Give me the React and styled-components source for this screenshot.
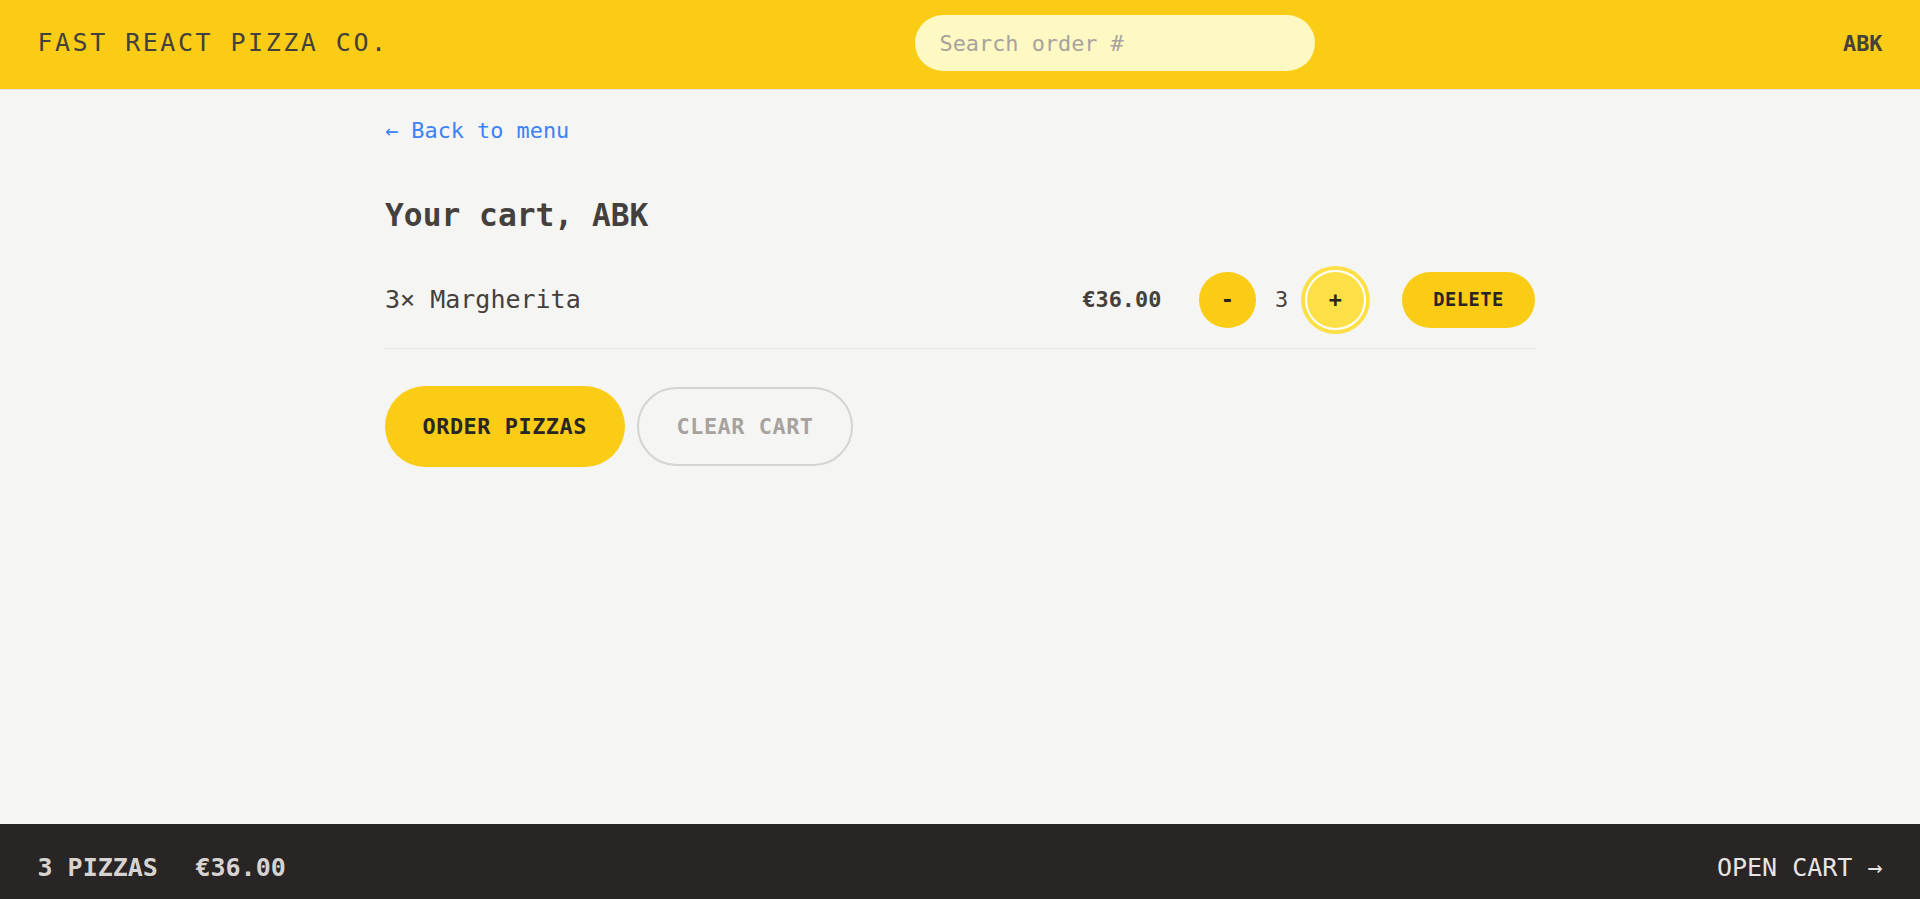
import React from "react";
import styled, { createGlobalStyle, css } from "styled-components";

const GlobalStyle = createGlobalStyle`
  *, *::before, *::after {
    box-sizing: border-box;
  }

  html, body {
    margin: 0;
    padding: 0;
  }

  body {
    font-family: "DejaVu Sans Mono", "Liberation Mono", monospace;
    background: #f5f5f4;
    color: #44403c;
    overflow: hidden;
  }
`;

const Layout = styled.div`
  display: grid;
  grid-template-rows: auto 1fr 75px;
  height: 100vh;
`;

const Header = styled.header`
  display: flex;
  align-items: center;
  padding: 15px 37.5px 18px;
  background: #facc15;
  border-bottom: 1px solid #e7e5e4;
  text-transform: uppercase;
`;

const Logo = styled.a`
  font-size: 25px;
  line-height: 37.5px;
  letter-spacing: 0.1em;
  color: #44403c;
  text-decoration: none;
`;

const SearchInput = styled.input`
  width: 400px;
  margin-left: 526px;
  padding: 12.5px 25px;
  border: none;
  border-radius: 9999px;
  background: #fef9c3;
  font-family: inherit;
  font-size: 21.875px;
  line-height: 31.25px;
  color: #44403c;
  outline: none;

  &::placeholder {
    color: #a8a29e;
  }
`;

const Username = styled.div`
  margin-left: auto;
  font-size: 21.875px;
  font-weight: 600;
  color: #44403c;
`;

const Main = styled.main`
  overflow: hidden;
`;

const Container = styled.div`
  max-width: 1200px;
  margin: 0 auto;
  padding: 24.5px 25px;
`;

const BackLink = styled.a`
  display: block;
  width: fit-content;
  font-size: 21.875px;
  line-height: 32px;
  color: #3b82f6;
  text-decoration: none;
`;

const Title = styled.h2`
  margin: 48px 0 0;
  font-size: 31.25px;
  line-height: 40px;
  font-weight: 600;
  color: #44403c;
`;

const CartList = styled.ul`
  margin: 17.5px 0 0;
  padding: 0;
  list-style: none;
  border-bottom: 1px solid #e7e5e4;
`;

const CartRow = styled.li`
  display: flex;
  align-items: center;
  justify-content: space-between;
  padding: 19.5px 0;
`;

const ItemName = styled.p`
  margin: 0;
  font-size: 25px;
  line-height: 37.5px;
`;

const ItemControls = styled.div`
  display: flex;
  align-items: center;
  gap: 37.5px;
`;

const Price = styled.p`
  margin: 0;
  font-size: 21.875px;
  font-weight: 700;
`;

const Quantity = styled.div`
  display: flex;
  align-items: center;
  gap: 18.75px;
`;

const Count = styled.span`
  font-size: 21.875px;
  font-weight: 500;
`;

const variants = {
  primary: css`
    padding: 25px 37.5px;
    font-size: 21.875px;
    line-height: 31.25px;
  `,
  secondary: css`
    padding: 21.875px 37.5px;
    font-size: 21.875px;
    line-height: 31.25px;
    background: transparent;
    border: 2px solid #d6d3d1;
    color: #a8a29e;
  `,
  small: css`
    padding: 15.625px 31.25px;
    font-size: 18.75px;
    line-height: 25px;
  `,
  round: css`
    padding: 12.5px 21.875px;
    font-size: 21.875px;
    line-height: 31.25px;
  `,
};

const Button = styled.button`
  font-family: inherit;
  font-weight: 600;
  text-transform: uppercase;
  letter-spacing: 0.025em;
  border: none;
  border-radius: 9999px;
  background: #facc15;
  color: #292524;
  cursor: pointer;
  ${(p) => variants[p.$variant || "primary"]}
  ${(p) =>
    p.$active &&
    css`
      background: #fde047;
      box-shadow: 0 0 0 2px #ffffff, 0 0 0 6px #fde047;
    `}
`;

const Actions = styled.div`
  display: flex;
  align-items: center;
  gap: 12.5px;
  margin-top: 37.5px;
`;

const Footer = styled.footer`
  display: flex;
  align-items: flex-start;
  justify-content: space-between;
  padding: 25px 37.5px 0;
  background: #292524;
  color: #e7e5e4;
  text-transform: uppercase;
  font-size: 25px;
  line-height: 37.5px;
  overflow: hidden;
`;

const Summary = styled.p`
  display: flex;
  gap: 37.5px;
  margin: 0;
  color: #d6d3d1;
  font-weight: 600;
`;

const OpenCart = styled.a`
  color: inherit;
  text-decoration: none;
`;

const cart = [{ id: 1, name: "Margherita", quantity: 3, unitPrice: 12 }];

const formatCurrency = (value) => `€${value.toFixed(2)}`;

const App = () => {
  const totalQty = cart.reduce((sum, item) => sum + item.quantity, 0);
  const totalPrice = cart.reduce((sum, item) => sum + item.quantity * item.unitPrice, 0);

  return (
    <>
      <GlobalStyle />
      <Layout>
        <Header>
          <Logo href="#">Fast React Pizza Co.</Logo>
          <SearchInput placeholder="Search order #" />
          <Username>abk</Username>
        </Header>

        <Main>
          <Container>
            <BackLink href="#">← Back to menu</BackLink>
            <Title>Your cart, ABK</Title>

            <CartList>
              {cart.map((item) => (
                <CartRow key={item.id}>
                  <ItemName>
                    {item.quantity}× {item.name}
                  </ItemName>
                  <ItemControls>
                    <Price>{formatCurrency(item.quantity * item.unitPrice)}</Price>
                    <Quantity>
                      <Button $variant="round">-</Button>
                      <Count>{item.quantity}</Count>
                      <Button $variant="round" $active>
                        +
                      </Button>
                    </Quantity>
                    <Button $variant="small">Delete</Button>
                  </ItemControls>
                </CartRow>
              ))}
            </CartList>

            <Actions>
              <Button $variant="primary">Order pizzas</Button>
              <Button $variant="secondary">Clear cart</Button>
            </Actions>
          </Container>
        </Main>

        <Footer>
          <Summary>
            <span>{totalQty} pizzas</span>
            <span>{formatCurrency(totalPrice)}</span>
          </Summary>
          <OpenCart href="#">Open cart →</OpenCart>
        </Footer>
      </Layout>
    </>
  );
};

export default App;
